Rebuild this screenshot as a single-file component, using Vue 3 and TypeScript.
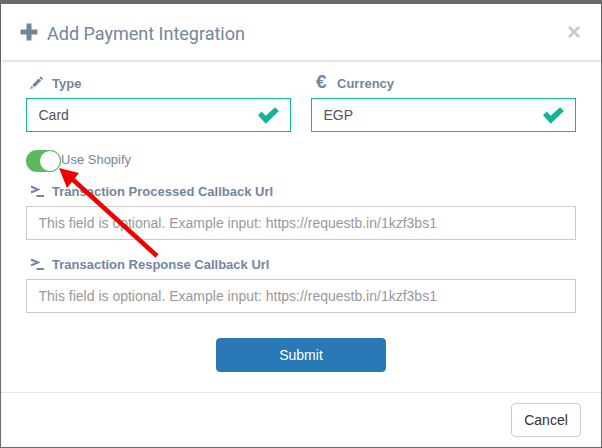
<script setup lang="ts">
const placeholder = 'This field is optional. Example input: https://requestb.in/1kzf3bs1'
const selects = [
  { label: 'Type', value: 'Card', icon: 'pencil' },
  { label: 'Currency', value: 'EGP', icon: 'euro' },
]
const urls = ['Transaction Processed Callback Url', 'Transaction Response Callback Url']
</script>

<template>
  <div class="modal">
    <header class="head">
      <svg class="plus" width="18" height="18" viewBox="0 0 18 18"><path d="M6.5 0.5h5v6h6v5h-6v6h-5v-6h-6v-5h6z" fill="#72869f" /></svg>
      <h4>Add Payment Integration</h4>
      <span class="close">×</span>
    </header>
    <form class="body" @submit.prevent>
      <div class="cols">
        <div v-for="s in selects" :key="s.label" class="col">
          <label class="lab">
            <svg v-if="s.icon === 'pencil'" class="ic" width="16" height="14" viewBox="0 0 16 14"><path d="M11.6 0.4l2.5 2.2-1.2 1.3-2.5-2.2zM9.7 2.4l2.5 2.2-6.6 6.7-2.5-2.2zM2.4 10l2.1 1.9-3.2 1.2z" fill="#72869f" /></svg>
            <span v-else class="euro">€</span>
            {{ s.label }}
          </label>
          <div class="select">
            <span>{{ s.value }}</span>
            <svg class="check" width="23" height="17" viewBox="0 0 22 17"><path d="M0.5 8.2l3.6-3.6 4.1 4.1L17.5 0.3l3.9 3.7-13.2 12.7z" fill="#12b59a" /></svg>
          </div>
        </div>
      </div>
      <div class="toggle-row">
        <span class="toggle"><i></i></span>
        <span class="use">Use Shopify</span>
      </div>
      <div v-for="u in urls" :key="u" class="url">
        <label class="lab">
          <svg class="ic" width="16" height="14" viewBox="0 0 16 14"><path d="M2 2.5l7 3-7 3" fill="none" stroke="#72869f" stroke-width="2" /><path d="M7.5 12h7.5" stroke="#72869f" stroke-width="2" /></svg>
          {{ u }}
        </label>
        <input type="text" :placeholder="placeholder" />
      </div>
      <button class="submit" type="submit">Submit</button>
    </form>
    <footer class="foot"><button class="cancel" type="button">Cancel</button></footer>
    <svg class="arrow" width="602" height="448" viewBox="0 0 602 448"><path d="M157 256L70 177" stroke="#f00000" stroke-width="4.6" fill="none" /><path d="M59 168L79 173L67 188z" fill="#f00000" /></svg>
  </div>
</template>

<style>
html, body { margin: 0; background: #6b6b6b; }
</style>

<style scoped>
.modal {
  position: relative;
  box-sizing: border-box;
  width: 600px;
  height: 443px;
  margin: 4px 1px 0;
  background: #fff;
  font-family: "Liberation Sans", sans-serif;
  display: flex;
  flex-direction: column;
}
.head {
  box-sizing: border-box;
  height: 56px;
  display: flex;
  align-items: center;
  padding: 0 20px 0 19px;
  box-shadow: 0 1px 3px rgba(0, 0, 0, 0.2);
}
.plus { margin-right: 9px; margin-top: -1px; }
h4 {
  margin: 2px 0 0;
  flex: 1;
  font: 400 18px Roboto, sans-serif;
  color: #72869f;
}
.close {
  font: 700 24px "Liberation Sans", sans-serif;
  color: #c9c9c9;
}
.body { flex: 1; padding: 11px 25px 0; display: flex; flex-direction: column; }
.cols { display: flex; gap: 20px; }
.col { flex: 1; }
.lab {
  display: flex;
  align-items: center;
  height: 24px;
  font: 700 13px "Liberation Sans", sans-serif;
  color: #72869f;
}
.ic { margin: 0 7px 0 3px; }
.euro { width: 14px; margin: -3px 7px 0 5px; font-size: 19px; font-weight: 700; line-height: 1; }
.select {
  box-sizing: border-box;
  height: 34px;
  margin-top: 3px;
  border: 1px solid #12b59a;
  padding: 0 10px 0 11.5px;
  display: flex;
  align-items: center;
  justify-content: space-between;
  font-size: 14px;
  color: #555;
}
.toggle-row { display: flex; align-items: center; margin-top: 17px; height: 24px; }
.toggle {
  position: relative;
  box-sizing: border-box;
  width: 35px;
  height: 22px;
  border-radius: 11px;
  background: #5cb85c;
}
.toggle i {
  position: absolute;
  right: 0;
  top: 0;
  width: 22px;
  height: 22px;
  box-sizing: border-box;
  border: 1px solid #5cb85c;
  border-radius: 50%;
  background: #fff;
}
.use { font-size: 13px; color: #72869f; margin-top: -3px; }
.url { margin-top: 6px; }
.url + .url { margin-top: 12px; }
input {
  display: block;
  box-sizing: border-box;
  width: 100%;
  height: 34px;
  margin-top: 3px;
  border: 1px solid #ccc;
  padding: 0 11.5px;
  outline: none;
  font: 14px "Liberation Sans", sans-serif;
  color: #555;
}
input::placeholder { color: #999; opacity: 1; }
.submit {
  align-self: center;
  width: 170px;
  height: 34px;
  margin-top: 25px;
  border: 1px solid #2b78b0;
  border-radius: 4px;
  background: #2879b6;
  color: #fff;
  font: 14px "Liberation Sans", sans-serif;
}
.foot {
  box-sizing: border-box;
  height: 55px;
  border-top: 1px solid #e5e5e5;
  padding: 10px 20px 0;
  display: flex;
  justify-content: flex-end;
  align-items: flex-start;
}
.cancel {
  width: 70px;
  height: 34px;
  border: 1px solid #ccc;
  border-radius: 4px;
  background: #fff;
  color: #333;
  font: 14px "Liberation Sans", sans-serif;
}
.arrow { position: absolute; left: -1px; top: -4px; pointer-events: none; }
</style>
